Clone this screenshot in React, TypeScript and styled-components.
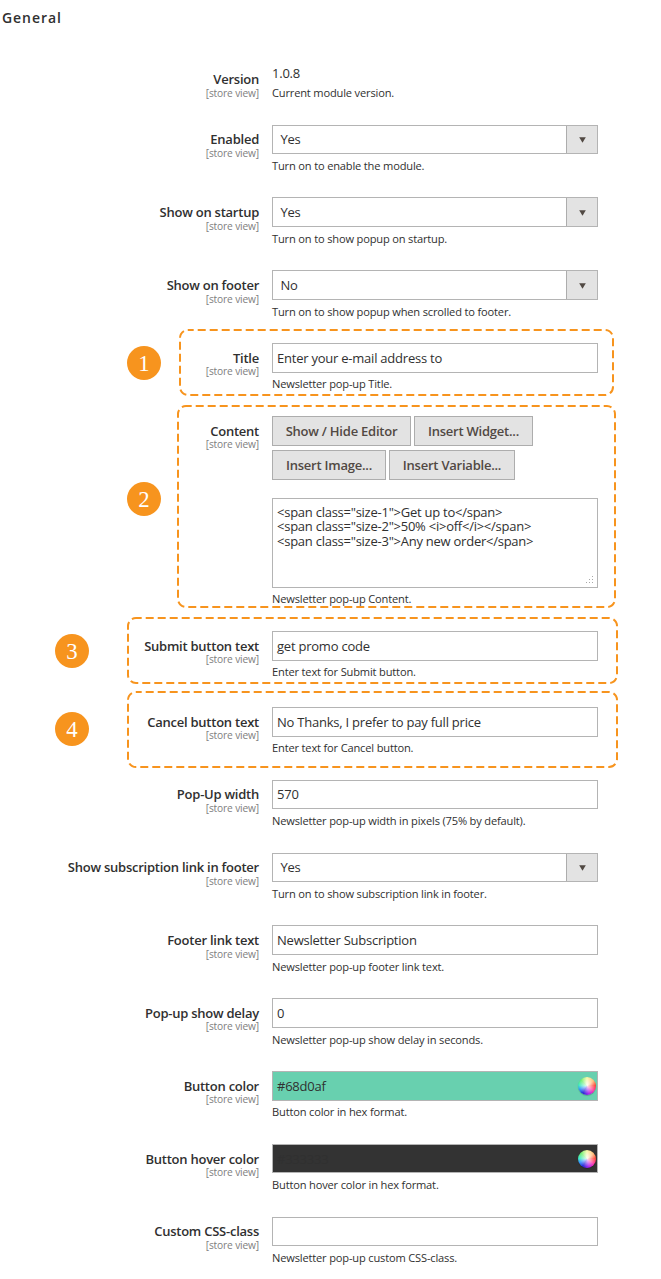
import React from "react";
import styled, { createGlobalStyle } from "styled-components";

const GlobalStyle = createGlobalStyle`
  *, *::before, *::after { box-sizing: border-box; }
  body {
    margin: 0;
    background: #fff;
    color: #303030;
    font-family: "Open Sans", "Noto Sans", sans-serif;
    font-size: 13px;
    letter-spacing: -0.23px;
  }
`;

const Page = styled.main`
  width: 661px;
  height: 1279px;
  overflow: hidden;
`;

const Heading = styled.h2`
  margin: 0;
  height: 65px;
  padding: 8px 0 0 2px;
  font-size: 14px;
  line-height: 20px;
  font-weight: 600;
  letter-spacing: 0.95px;
`;

const Row = styled.section<{ $height: number }>`
  position: relative;
  display: grid;
  grid-template-columns: 259px 326px;
  column-gap: 13px;
  align-items: start;
  height: ${(p) => p.$height}px;
`;

const LabelCell = styled.div<{ $top: number }>`
  display: flex;
  flex-direction: column;
  align-items: flex-end;
  padding-top: ${(p) => p.$top}px;
`;

const Label = styled.label`
  font-weight: 600;
  line-height: 14px;
  letter-spacing: -0.24px;
  white-space: nowrap;
`;

const Scope = styled.span<{ $drop: number }>`
  margin-top: ${(p) => p.$drop}px;
  color: #808080;
  font-size: 10.2px;
  line-height: 12px;
  letter-spacing: -0.15px;
`;

const Control = styled.div`
  display: flex;
  flex-direction: column;
`;

const Value = styled.div`
  height: 18px;
  line-height: 16px;
`;

const Box = styled.div<{ $h: number; $fill?: string }>`
  display: flex;
  align-items: center;
  justify-content: space-between;
  height: ${(p) => p.$h}px;
  padding: 0 0 0 4px;
  border: 1px solid #b4b4b4;
  background: ${(p) => p.$fill ?? "#fff"};
  line-height: 18px;
  white-space: nowrap;
`;

const SelectBox = styled(Box)`
  padding-left: 7.5px;
`;

const BoxText = styled.span<{ $raise: number }>`
  padding-bottom: ${(p) => p.$raise}px;
`;

const Arrow = styled.span<{ $raise: number }>`
  display: flex;
  align-items: center;
  justify-content: center;
  align-self: stretch;
  width: 31px;
  padding-top: ${(p) => 2 - p.$raise}px;
  border-left: 1px solid #adadad;
  background: #e3e3e3;
`;

const Note = styled.p<{ $gap: number }>`
  margin: ${(p) => p.$gap}px 0 0;
  font-size: 11.1px;
  line-height: 16px;
  letter-spacing: -0.17px;
  white-space: nowrap;
`;

const Buttons = styled.div`
  display: flex;
  flex-wrap: wrap;
  gap: 4px 3px;
`;

const Button = styled.button<{ $width: number }>`
  width: ${(p) => p.$width}px;
  height: 30px;
  padding: 0;
  border: 1px solid #adadad;
  background: #e3e3e3;
  color: #514943;
  font: 600 13px/18px "Open Sans", "Noto Sans", sans-serif;
  letter-spacing: -0.23px;
  white-space: nowrap;
`;

const Editor = styled.div`
  display: flex;
  justify-content: space-between;
  align-items: flex-end;
  height: 90px;
  margin-top: 18px;
  padding: 6px 3px 2px 4px;
  border: 1px solid #b4b4b4;
`;

const Code = styled.pre`
  align-self: flex-start;
  margin: 0;
  font: 13px/14.4px "Open Sans", "Noto Sans", sans-serif;
  letter-spacing: -0.25px;
`;

const Wheel = styled.span`
  width: 18px;
  height: 18px;
  margin-right: 1px;
  border-radius: 50%;
  box-shadow: 0 1px 1px rgba(0, 0, 0, 0.2);
  background:
    radial-gradient(circle at 52% 45%, rgba(255, 255, 255, 0.9) 0, rgba(255, 255, 255, 0.45) 34%, rgba(255, 255, 255, 0) 66%),
    conic-gradient(#f6f79a, #ffb060 50deg, #ff3020 85deg, #ff30a0 125deg, #b020f0 165deg, #2828d8 210deg, #3090ff 245deg, #38e8c0 275deg, #60ee60 315deg, #f6f79a);
`;

const Badge = styled.span<{ $x: number; $y: number }>`
  position: absolute;
  left: ${(p) => p.$x}px;
  top: ${(p) => p.$y}px;
  display: flex;
  align-items: center;
  justify-content: center;
  width: 34px;
  height: 34px;
  border-radius: 50%;
  background: #f7941e;
  color: #fff;
  font: 24px/34px "Liberation Serif", serif;
  letter-spacing: 0;
`;

const Digit = styled.span`
  transform: scaleX(0.95);
`;

const Outline = styled.svg<{ $x: number; $y: number }>`
  position: absolute;
  left: ${(p) => p.$x}px;
  top: ${(p) => p.$y}px;
  overflow: visible;
  pointer-events: none;
`;

type Mark = {
  n: number;
  badge: [number, number];
  frame: [number, number, number, number];
};

function Highlight({ mark }: { mark: Mark }) {
  const [x, y, w, h] = mark.frame;
  return (
    <>
      <Badge $x={mark.badge[0]} $y={mark.badge[1]}><Digit>{mark.n}</Digit></Badge>
      <Outline $x={x} $y={y} width={w} height={h}>
        <rect width={w} height={h} rx="8" fill="none" stroke="#f7941e" strokeWidth="2" strokeDasharray="8 4" strokeDashoffset="2.3" />
      </Outline>
    </>
  );
}

type Field = {
  label: string;
  kind: "select" | "text" | "color";
  value: string;
  note: string;
  height: number;
  box: number;
  noteTop?: number;
  labelTop?: number;
  scopeDrop?: number;
  raise?: number;
  fill?: string;
  mark?: Mark;
};

const before: Field[] = [
  { label: "Enabled", kind: "select", value: "Yes", note: "Turn on to enable the module.", height: 72, box: 29, scopeDrop: 1, labelTop: 7, noteTop: 33, raise: 2 },
  { label: "Show on startup", kind: "select", value: "Yes", note: "Turn on to show popup on startup.", height: 73, box: 30, scopeDrop: 1, noteTop: 34 },
  { label: "Show on footer", kind: "select", value: "No", note: "Turn on to show popup when scrolled to footer.", height: 73, box: 30, scopeDrop: 1, noteTop: 34 },
  {
    label: "Title", kind: "text", value: "Enter your e-mail address to", note: "Newsletter pop-up Title.", height: 73, box: 30,
    mark: { n: 1, badge: [127, 3], frame: [180, -13, 433, 65] },
  },
];

const after: Field[] = [
  {
    label: "Submit button text", kind: "text", value: "get promo code", note: "Enter text for Submit button.", height: 76, box: 30,
    mark: { n: 3, badge: [55, 3], frame: [128, -13, 489, 65] },
  },
  {
    label: "Cancel button text", kind: "text", value: "No Thanks, I prefer to pay full price", note: "Enter text for Cancel button.", height: 73, box: 30,
    mark: { n: 4, badge: [55, 5], frame: [128, -15, 489, 75] },
  },
  { label: "Pop-Up width", kind: "text", value: "570", note: "Newsletter pop-up width in pixels (75% by default).", height: 73, box: 29, labelTop: 7, scopeDrop: 1, raise: 2 },
  { label: "Show subscription link in footer", kind: "select", value: "Yes", note: "Turn on to show subscription link in footer.", height: 72, box: 29, labelTop: 7, scopeDrop: 1, raise: 2 },
  { label: "Footer link text", kind: "text", value: "Newsletter Subscription", note: "Newsletter pop-up footer link text.", height: 73, box: 30, scopeDrop: 1, noteTop: 34 },
  { label: "Pop-up show delay", kind: "text", value: "0", note: "Newsletter pop-up show delay in seconds.", height: 73, box: 30, noteTop: 34 },
  { label: "Button color", kind: "color", value: "#68d0af", note: "Button color in hex format.", height: 73, box: 30, fill: "#68d0af" },
  { label: "Button hover color", kind: "color", value: "#333333", note: "Button hover color in hex format.", height: 73, box: 29, fill: "#333333" },
  { label: "Custom CSS-class", kind: "text", value: "", note: "Newsletter pop-up custom CSS-class.", height: 62, box: 29, labelTop: 7, scopeDrop: 1 },
];

function FieldLabel({ text, top = 8, drop = 0 }: { text: string; top?: number; drop?: number }) {
  return (
    <LabelCell $top={top}>
      <Label>{text}</Label>
      <Scope $drop={drop}>[store view]</Scope>
    </LabelCell>
  );
}

function FieldRow({ field }: { field: Field }) {
  const raise = field.raise ?? 0;
  return (
    <Row $height={field.height}>
      <FieldLabel text={field.label} top={field.labelTop} drop={field.scopeDrop} />
      <Control>
        {field.kind === "select" ? (
          <SelectBox $h={field.box}>
            <BoxText $raise={raise}>{field.value}</BoxText>
            <Arrow $raise={raise}>
              <svg width="7" height="6" viewBox="0 0 7 6">
                <path d="M0.2 0.3H6.8L3.5 5.8Z" fill="#514943" />
              </svg>
            </Arrow>
          </SelectBox>
        ) : (
          <Box $h={field.box} $fill={field.fill}>
            <BoxText $raise={raise}>{field.value}</BoxText>
            {field.kind === "color" && <Wheel />}
          </Box>
        )}
        <Note $gap={(field.noteTop ?? 33) - field.box}>{field.note}</Note>
      </Control>
      {field.mark && <Highlight mark={field.mark} />}
    </Row>
  );
}

const code = `<span class="size-1">Get up to</span>
<span class="size-2">50% <i>off</i></span>
<span class="size-3">Any new order</span>`;

export default function App() {
  return (
    <Page>
      <GlobalStyle />
      <Heading>General</Heading>
      <Row $height={60}>
        <FieldLabel text="Version" top={7} drop={1} />
        <Control>
          <Value>1.0.8</Value>
          <Note $gap={2}>Current module version.</Note>
        </Control>
      </Row>
      {before.map((f) => <FieldRow key={f.label} field={f} />)}
      <Row $height={215}>
        <FieldLabel text="Content" />
        <Control>
          <Buttons>
            <Button $width={139}>Show / Hide Editor</Button>
            <Button $width={119}>Insert Widget...</Button>
            <Button $width={114}>Insert Image...</Button>
            <Button $width={126}>Insert Variable...</Button>
          </Buttons>
          <Editor>
            <Code>{code}</Code>
            <svg width="9" height="9" viewBox="0 0 9 9" fill="#a8a8a8">
              <path d="M7 0h1v1h-1zM7 3h1v1h-1zM4 3h1v1h-1zM7 6h1v1h-1zM4 6h1v1h-1zM1 6h1v1h-1z" />
            </svg>
          </Editor>
          <Note $gap={3}>Newsletter pop-up Content.</Note>
        </Control>
        <Highlight mark={{ n: 2, badge: [127, 66], frame: [178, -10, 437, 201] }} />
      </Row>
      {after.map((f) => <FieldRow key={f.label} field={f} />)}
    </Page>
  );
}
